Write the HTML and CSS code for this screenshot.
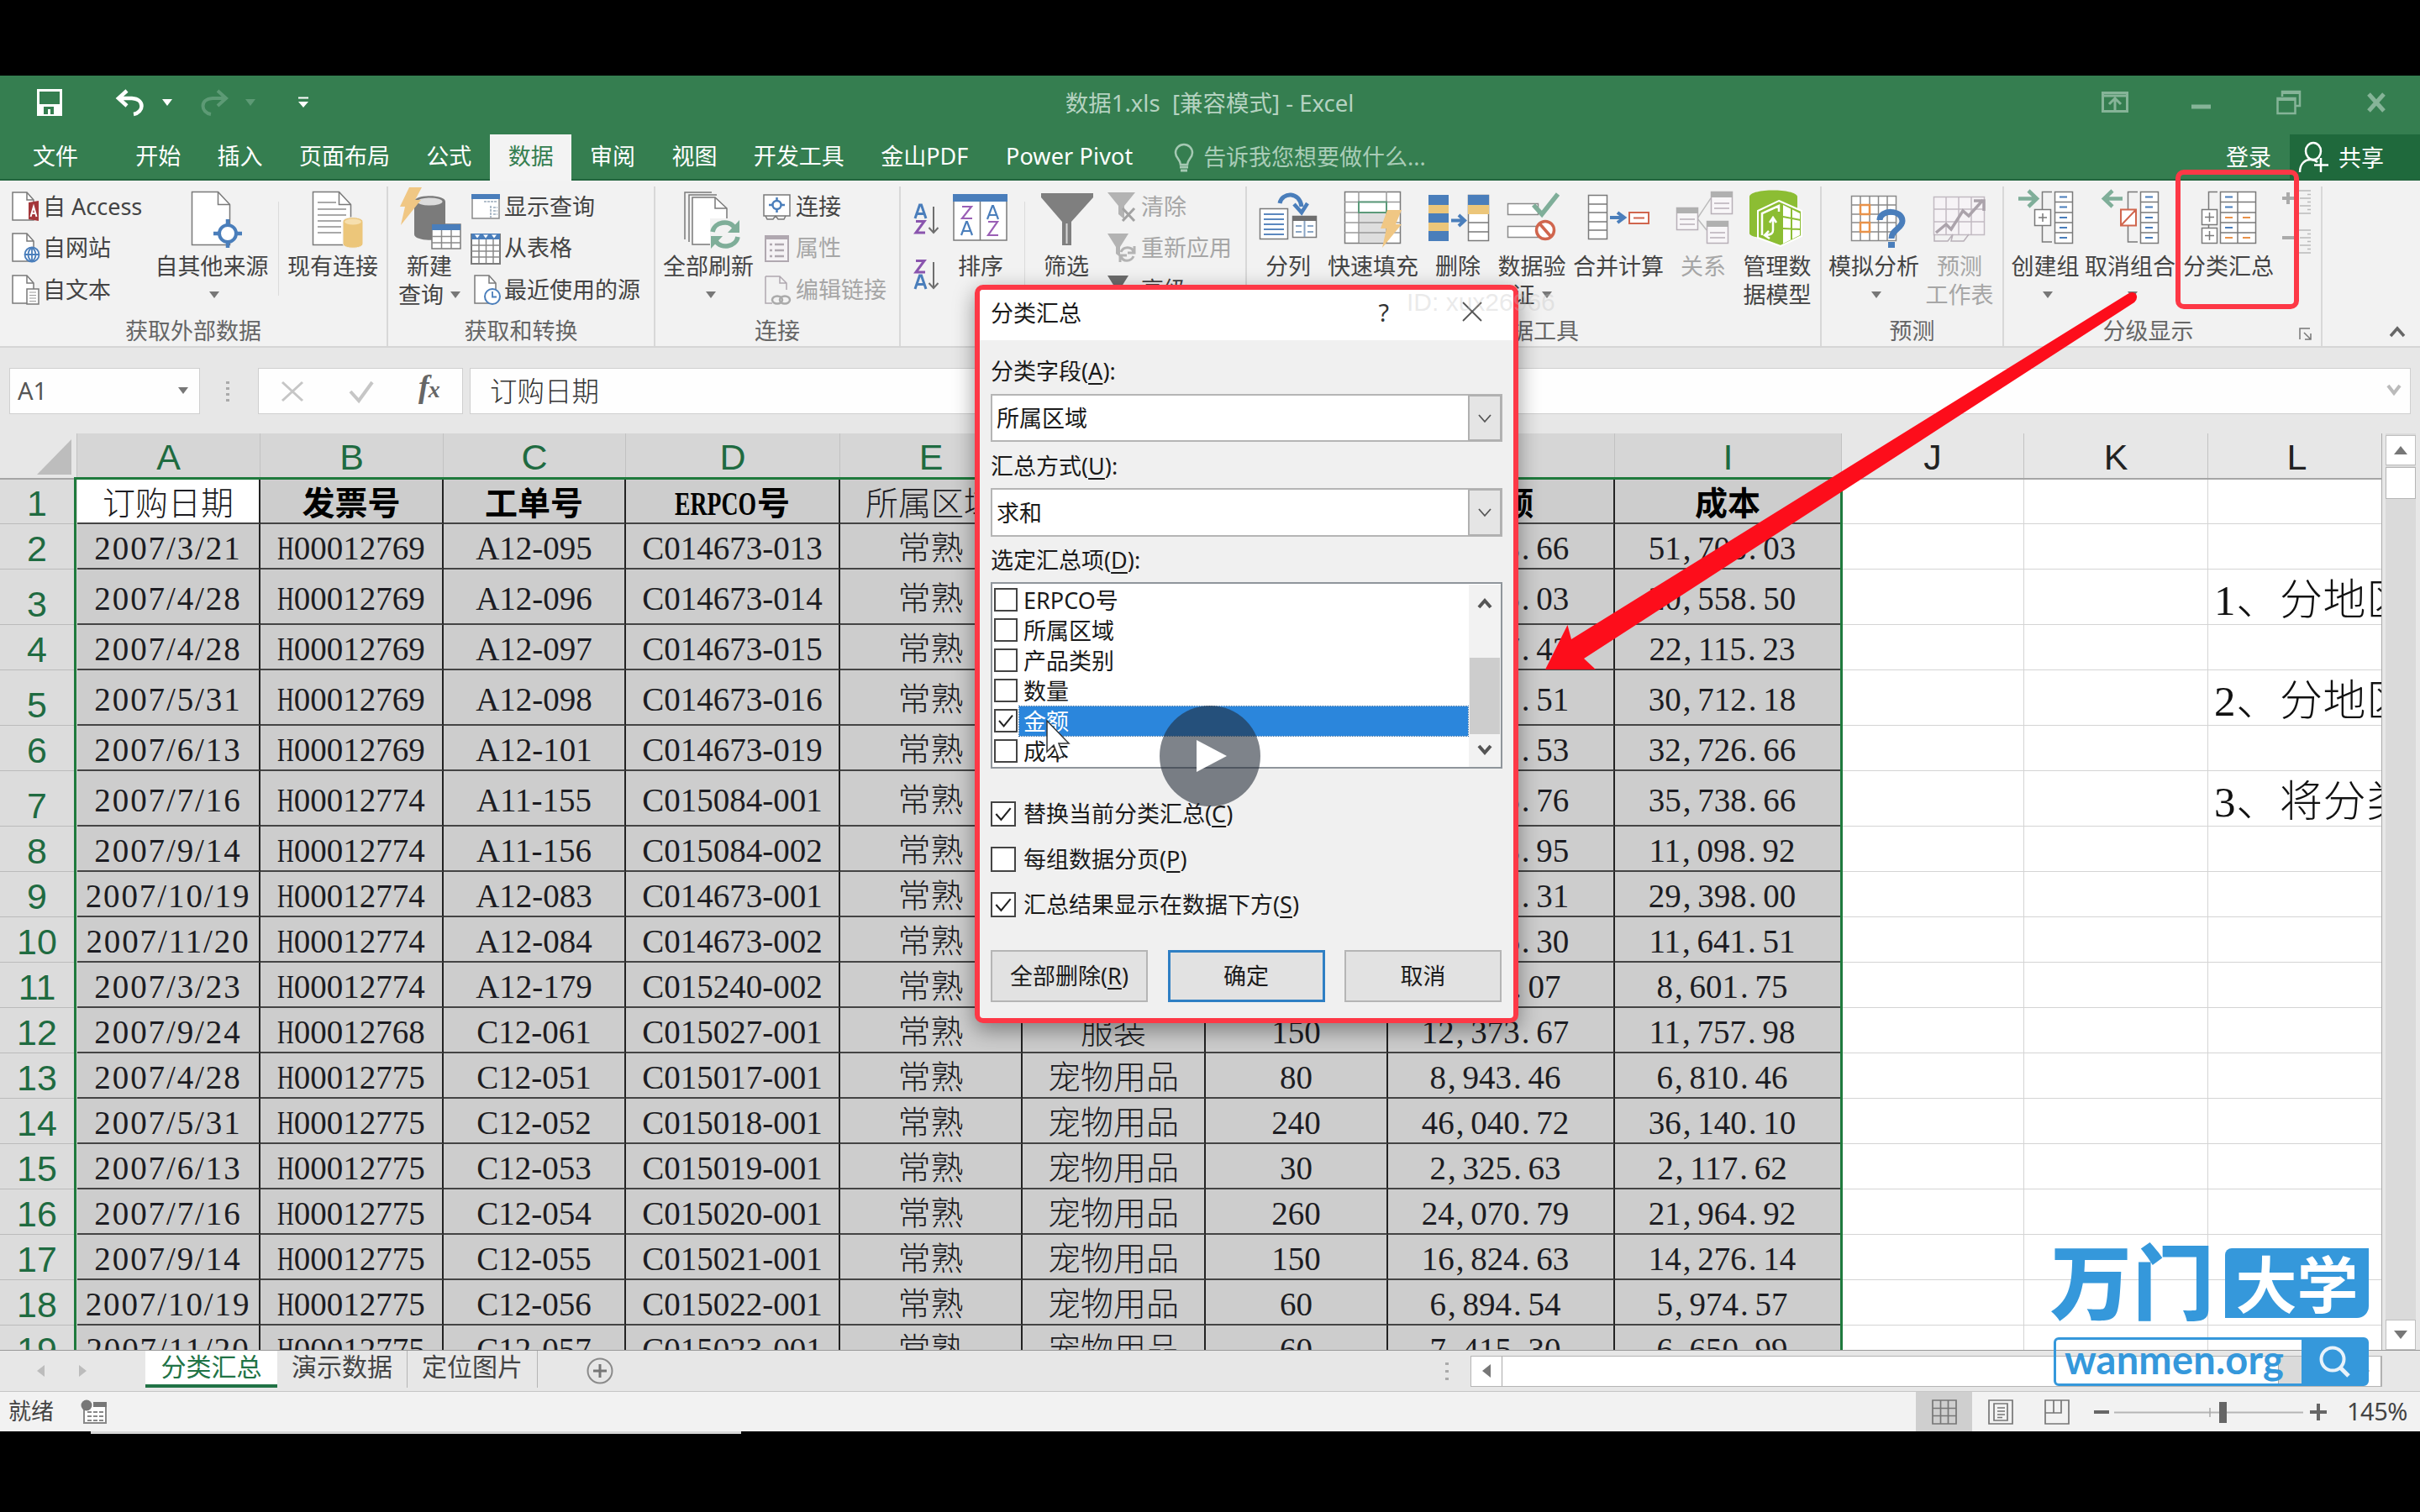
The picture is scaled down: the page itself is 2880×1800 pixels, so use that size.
FILE: index.html
```html
<!DOCTYPE html>
<html lang="zh-CN">
<head>
<meta charset="utf-8">
<title>数据1.xls [兼容模式] - Excel</title>
<link rel="stylesheet" href="styles.css">
</head>
<body>
<div class="app">
  <header class="titlebar">
    <div class="qat">
      <svg class="q-save" width="30" height="32" viewBox="0 0 30 32"><path d="M1.5 1.5h27v29h-27z" fill="none" stroke="#fff" stroke-width="3"/><path d="M2 18h26v12H2z" fill="#fff"/><path d="M8 21h12v9h-4v-6h-3v6H8z" fill="#357e50"/></svg>
      <svg class="q-undo" width="34" height="32" viewBox="0 0 34 32"><path d="M13 2L3 11l10 9M4 11h15c16 1 14 17 2 19" fill="none" stroke="#fff" stroke-width="4.5"/></svg>
      <i class="tri white q-t1"></i>
      <svg class="q-redo" width="34" height="32" viewBox="0 0 34 32"><path d="M21 2l10 9-10 9M30 11H15C-1 12 1 28 13 30" fill="none" stroke="#5d9a75" stroke-width="4"/></svg>
      <i class="tri dim q-t2"></i>
      <svg class="q-more" width="12" height="14" viewBox="0 0 12 14"><path d="M0 1.5h12" stroke="#fff" stroke-width="2"/><path d="M0 6h12l-6 7z" fill="#fff"/></svg>
    </div>
    <div class="doc-title">数据1.xls&nbsp; [兼容模式] - Excel</div>
    <div class="win">
      <svg width="32" height="26" viewBox="0 0 32 26"><path d="M1.5 1.5h29v22h-29zM2 5h28M16 22V9M9 15l7-7 7 7" fill="none" stroke="#86b498" stroke-width="3"/></svg>
      <svg class="w-min" width="23" height="6" viewBox="0 0 23 6"><path d="M0 3h23" stroke="#86b498" stroke-width="5"/></svg>
      <svg class="w-max" width="30" height="30" viewBox="0 0 30 30"><path d="M7 8V2h21v17h-6M1.500 10h21v18h-21z" fill="none" stroke="#86b498" stroke-width="2.500"/><path d="M1 11h22M7 3h21" stroke="#86b498" stroke-width="4"/></svg>
      <svg class="w-x" width="22" height="22" viewBox="0 0 22 22"><path d="M2 1l18 20M20 1L2 21" stroke="#86b498" stroke-width="5"/></svg>
    </div>
  </header>

  <nav class="tabs">
    <div class="tab file">文件</div>
    <div class="tab">开始</div><div class="tab">插入</div><div class="tab">页面布局</div><div class="tab">公式</div><div class="tab on">数据</div><div class="tab">审阅</div><div class="tab">视图</div><div class="tab">开发工具</div><div class="tab">金山PDF</div><div class="tab">Power Pivot</div>
    <svg class="bulb" width="24" height="34" viewBox="0 0 24 34"><path d="M8 25c0-6-6-8-6-14a10 10 0 0 1 20 0c0 6-6 8-6 14z" fill="none" stroke="#a5c9b3" stroke-width="2.500"/><path d="M7 28h10M8 32h8" stroke="#a5c9b3" stroke-width="3"/></svg>
    <div class="tell">告诉我您想要做什么...</div>
    <div class="signin">登录</div>
    <div class="share"><svg width="36" height="38" viewBox="0 0 36 38"><ellipse cx="17" cy="12" rx="9" ry="10" fill="none" stroke="#fff" stroke-width="2.500"/><path d="M1 37c0-10 6-15 13-15 4 0 6 1 8 3M26 20v17M18 28.500h17" fill="none" stroke="#fff" stroke-width="2.500"/></svg><span>共享</span></div>
  </nav>

  <section class="ribbon">
    <div class="group g1">
      <div class="tools">
        <div class="smalls">
          <div class="sm"><svg viewBox="0 0 34 38"><use href="#doc"/><path d="M20 14l12-2v24l-12-2z" fill="#a4373a"/><path d="M22.500 31l3.500-12 3.500 12M23.500 27h5" stroke="#fff" stroke-width="2" fill="none"/></svg>自 Access</div>
          <div class="sm"><svg viewBox="0 0 34 38"><use href="#doc"/><g fill="#fff" stroke="#4a7ebb" stroke-width="1.800"><circle cx="24" cy="27" r="8.500"/><path d="M15.500 27h17M24 18.500v17M24 18.500c-6 5-6 12 0 17M24 18.500c6 5 6 12 0 17" fill="none"/></g></svg>自网站</div>
          <div class="sm"><svg viewBox="0 0 34 38"><use href="#doc"/><path d="M18 18h14v18H18z" fill="#fff" stroke="#7a7a7a" stroke-width="1.500"/><path d="M21 22h8M21 25.500h8M21 29h8M21 32.500h8" stroke="#999" stroke-width="1.200"/></svg>自文本</div>
        </div>
        <div class="big w134"><svg viewBox="0 0 76 78"><use href="#bigdoc"/><g fill="none" stroke="#4a7ebb"><circle cx="57" cy="56" r="10" stroke-width="4" fill="#fff"/><path d="M57 39v9M57 64v9M40 56h9M65 56h9" stroke-width="4.500"/></g></svg><span>自其他来源</span><i class="tri"></i></div>
        <div class="vsep s1"></div>
        <div class="big w110 m9"><svg viewBox="0 0 76 78"><use href="#bigdoc"/><path d="M20 19h22M20 27h34M20 34h34M20 41h28M20 48h28M20 55h28" stroke="#a9a9a9" stroke-width="2"/><path d="M50 42c0-7 24-7 24 0v26c0 7-24 7-24 0z" fill="#ecc67a" stroke="#f2f2f2"/><ellipse cx="62" cy="42" rx="10" ry="3.500" fill="#f6dfae"/></svg><span>现有连接</span></div>
      </div>
      <div class="glabel">获取外部数据</div>
    </div>
    <div class="group g2">
      <div class="tools">
        <div class="big w78"><svg viewBox="0 0 76 78"><path d="M20 18c0-9 37-9 37 0v39c0 9-37 9-37 0z" fill="#7b7b7b"/><ellipse cx="38.500" cy="18" rx="15" ry="4.500" fill="#dcdcdc"/><path d="M14 1h15l-8 15h7L4 46l5-22H3z" fill="#f0c784"/><path d="M41 45h34v29H41z" fill="#fff" stroke="#7b7b7b" stroke-width="1.500"/><path d="M41 45h34v7H41z" fill="#4a7ebb"/><path d="M52.500 52v22M64 52v22M41 59.500h34M41 67h34" stroke="#8a8a8a" stroke-width="1.500"/></svg><span>新建</span><span class="two">查询<i class="tri"></i></span></div>
        <div class="smalls m11">
          <div class="sm"><svg viewBox="0 0 34 38"><path d="M1 5h32v28H1z" fill="#fff" stroke="#8a8a8a" stroke-width="1.500"/><path d="M0 4h34v6H0z" fill="#4a7ebb"/><path d="M15 13h16M23 18v14M26 20h5M26 24h5M26 28h5" stroke="#9ab" stroke-width="1.600" stroke-dasharray="3 1"/></svg>显示查询</div>
          <div class="sm"><svg viewBox="0 0 34 38"><path d="M0 3h34v35H0z" fill="#fff" stroke="#7b7b7b" stroke-width="2"/><path d="M9 9v28M17.500 9v28M26 9v28M0 16h34M0 23h34M0 30h34" stroke="#8a8a8a" stroke-width="1.500"/><path d="M0 2h34v7H0z" fill="#4a7ebb"/><path d="M4 3.500h6l-3 4zM14 3.500h6l-3 4zM24 3.500h6l-3 4z" fill="#fff"/></svg>从表格</div>
          <div class="sm"><svg viewBox="0 0 34 38"><use href="#doc" x="3"/><circle cx="25" cy="27" r="9" fill="#fff" stroke="#4a7ebb" stroke-width="2"/><path d="M25 21v6.500h5" fill="none" stroke="#4a7ebb" stroke-width="1.800"/></svg>最近使用的源</div>
        </div>
      </div>
      <div class="glabel">获取和转换</div>
    </div>
    <div class="group g3">
      <div class="tools">
        <div class="big w110 m8"><svg viewBox="0 0 76 78"><path d="M10 63V7h32M15 66V10h33" fill="none" stroke="#7a7a7a" stroke-width="1.500"/><path d="M19 13h27l14 13v43H19z" fill="#fff" stroke="#7a7a7a" stroke-width="1.500"/><path d="M46 13v13h14" fill="none" stroke="#7a7a7a" stroke-width="1.500"/><path d="M40 38h37v37H40z" fill="#f2f2f2"/><path d="M43 54c2-12 20-15 26-5M73 60c-2 12-20 15-26 5" fill="none" stroke="#7fae99" stroke-width="5.500"/><path d="M75 40v15H61zM41 74V59h14z" fill="#7fae99"/></svg><span>全部刷新</span><i class="tri"></i></div>
        <div class="smalls m9">
          <div class="sm w40"><svg viewBox="0 0 34 38"><path d="M2 5h31v25H2z" fill="#fff" stroke="#7a7a7a" stroke-width="1.500"/><circle cx="17.500" cy="17" r="5" fill="none" stroke="#4a7ebb" stroke-width="2.500"/><path d="M17.500 8v5M17.500 21v5M8 17h5M22 17h5" stroke="#4a7ebb" stroke-width="2.500"/><path d="M4 30l2 4h7l3-4M16 30l3 4h7l2-4" fill="none" stroke="#7a7a7a" stroke-width="1.500"/></svg>连接</div>
          <div class="sm w40 off"><svg viewBox="0 0 34 38"><path d="M4 5h27v30H4z" fill="#f5f2f5" stroke="#b0a8b0" stroke-width="2"/><path d="M4 4h27v5H4z" fill="#b0a8b0"/><path d="M9 15h3M15 15h11M9 22h3M15 22h11M9 29h3M15 29h11" stroke="#b0a8b0" stroke-width="2.500"/></svg>属性</div>
          <div class="sm w40 off"><svg viewBox="0 0 34 38"><path d="M4 3h17l8 8v8M12 35H4V3M21 3v8h8" fill="none" stroke="#b0a8b0" stroke-width="1.500"/><g fill="none" stroke="#aaa" stroke-width="2.500"><ellipse cx="18" cy="31" rx="6" ry="4.500"/><ellipse cx="27" cy="31" rx="6" ry="4.500"/></g></svg>编辑链接</div>
        </div>
      </div>
      <div class="glabel">连接</div>
    </div>
    <div class="group g4">
      <div class="tools">
        <div class="az">
          <svg viewBox="0 0 32 40"><g fill="none" stroke-width="3"><path d="M1 19L6.500 3h2L14 19M3 13.500h9" stroke="#4a7ebb"/><path d="M2 22.500h10L2 36h11" stroke="#8a55ae"/><path d="M23 5v31M17.500 30l5.500 6 5.500-6" stroke="#6e6e6e" stroke-width="2"/></g></svg>
          <svg viewBox="0 0 32 40"><g fill="none" stroke-width="3"><path d="M2 3.500h10L2 17h11" stroke="#8a55ae"/><path d="M1 37L6.500 21h2L14 37M3 31.500h9" stroke="#4a7ebb"/><path d="M23 5v31M17.500 30l5.500 6 5.500-6" stroke="#6e6e6e" stroke-width="2"/></g></svg>
        </div>
        <div class="big w70"><svg viewBox="0 0 76 78"><path d="M6 10h63v54H6z" fill="#fff" stroke="#7a7a7a" stroke-width="1.500"/><path d="M5 9h65v9H5z" fill="#4a7ebb"/><path d="M37.500 18v46" stroke="#7a7a7a" stroke-width="1.500"/><g fill="none" stroke-width="2.200"><path d="M16 24h11L16 38h12M47 42h11L47 58h12" stroke="#9a5fb5"/><path d="M15 58l6-16h1l6 16M17 53h9M46 39l6-16h1l6 16M48 34h9" stroke="#4a7ebb"/></g></svg><span>排序</span></div>
        <div class="vsep s2"></div>
        <div class="big w76 m11"><svg viewBox="0 0 76 78"><path d="M8 8h62v5L44 42v28H33V42L8 13z" fill="#7f7f7f"/><path d="M38.500 44v24" stroke="#d8d8d8" stroke-width="2"/></svg><span>筛选</span></div>
        <div class="smalls m11">
          <div class="sm w40 off"><svg viewBox="0 0 34 38"><path d="M0 2h33L20 18v16l-7-6V18z" fill="#b3b3b3"/><path d="M18 21l14 15M32 21L18 36" stroke="#a2a2a2" stroke-width="3"/></svg>清除</div>
          <div class="sm w40 off"><svg viewBox="0 0 34 38"><path d="M0 2h25L15 18v12l-5-4V18z" fill="#b3b3b3"/><path d="M16 24c3-7 13-7 15 0M31 29c-3 7-13 7-15 0M32 17v8h-8M15 36v-8h8" fill="none" stroke="#b3b3b3" stroke-width="3"/></svg>重新应用</div>
          <div class="sm w40"><svg viewBox="0 0 34 38"><path d="M0 2h25L15 18v12l-5-4V18z" fill="#6b6b6b"/></svg>高级</div>
        </div>
      </div>
    </div>
    <div class="group g5">
      <div class="tools">
        <div class="big w80"><svg viewBox="0 0 76 78"><path d="M4.500 26.500h33v36h-33z" fill="#fff" stroke="#7a7a7a" stroke-width="1.500"/><path d="M9 33h24M9 39h24M9 45h24M9 51h24M9 57h24" stroke="#5b88bf" stroke-width="2"/><path d="M43.500 35.500h28v25h-28z" fill="#fff" stroke="#7a7a7a" stroke-width="1.500"/><path d="M43 35h29v6H43z" fill="#6e6e6e"/><path d="M57.500 41v19M47 47h7M61 47h7M47 54h7M61 54h7" stroke="#8aa5c5" stroke-width="2"/><path d="M28 20c3-14 24-14 26 4" fill="none" stroke="#4a7ebb" stroke-width="5"/><path d="M45 21l9 10 7-11" fill="none" stroke="#4a7ebb" stroke-width="4.500"/></svg><span>分列</span></div>
        <div class="big w110"><svg viewBox="0 0 76 78"><path d="M4.500 6.500h66v61h-66z" fill="#fff" stroke="#7a7a7a" stroke-width="1.500"/><path d="M21 31h33v36H21z" fill="#dedede"/><path d="M21 6v61M54 6v61M4 18.500h66M4 31h66M4 43h66M4 55h66" stroke="#9a9a9a" stroke-width="1.500"/><path d="M21 18.500h33V31H21z" fill="#fff" stroke="#5b9a7a" stroke-width="2"/><path d="M55 28h17l-7 17h7L49 73l5-23h-7z" fill="#f0c784"/></svg><span>快速填充</span></div>
        <div class="big w80"><svg viewBox="0 0 76 78"><path d="M3 10h24v55H3z" fill="#4a7ebb"/><path d="M3 22h24v10H3zM3 43h24v10H3z" fill="#ecc67a"/><path d="M50.500 10.500h24v54h-24z" fill="#fff" stroke="#7a7a7a" stroke-width="1.500"/><path d="M50 10h25v12H50z" fill="#4a7ebb"/><path d="M50 22h25v11H50z" fill="#ecc67a"/><path d="M50 43h25M50 54h25" stroke="#7a7a7a" stroke-width="1.500"/><path d="M30 40.500h14M39 34l7 6.500-7 6.500" fill="none" stroke="#4a7ebb" stroke-width="4"/></svg><span>删除</span></div>
        <div class="big w84"><svg viewBox="0 0 76 78"><path d="M9.500 20.500h36v13h-36zM9.500 47.500h36v13h-36z" fill="#fff" stroke="#8a8a8a" stroke-width="1.500"/><path d="M40 22l10 11L69 9" fill="none" stroke="#7fae99" stroke-width="5.500"/><circle cx="54" cy="52" r="10.500" fill="#fff" stroke="#d0664e" stroke-width="3.500"/><path d="M47 44l14 16" stroke="#d0664e" stroke-width="3.500"/></svg><span>数据验</span><span class="two">证<i class="tri"></i></span></div>
        <div class="big w110"><svg viewBox="0 0 76 78"><path d="M2.500 10.500h22v52h-22zM2 21h23M2 31h23M2 42h23M2 52h23" fill="#fff" stroke="#7a7a7a" stroke-width="1.500"/><path d="M28 37h16M37 31l8 6-8 6" fill="none" stroke="#4a7ebb" stroke-width="4"/><path d="M51 31h23v13H51zM56 37.500h13" fill="#fff" stroke="#d0664e" stroke-width="2"/></svg><span>合并计算</span></div>
        <div class="big w80 off"><svg viewBox="0 0 76 78"><path d="M31 38l16-24M31 38l11 14" stroke="#bbb" stroke-width="1.500"/><g fill="#f8f6f8" stroke="#b8b0b8" stroke-width="1.500"><path d="M6.500 25.500h25v26h-25zM47.500 6.500h25v26h-25zM42.500 41.500h25v26h-25z"/><path d="M10 39h18M10 45h18M51 20h18M51 26h18M46 55h18M46 61h18"/></g><path d="M6 25h26v7H6zM47 6h26v7H47zM42 41h26v7H42z" fill="#b0b0b0"/></svg><span>关系</span></div>
        <div class="big w84"><svg viewBox="0 0 76 78"><path d="M5 12C6 2 60 2 62 12v44c-2 8-55 8-57 0z" fill="#8cbd33"/><path d="M40 17l27 12v30L42 71 15 61V29z" fill="#8cbd33" stroke="#fff" stroke-width="2"/><path d="M45 22l20 10v26L45 68z" fill="#fff"/><path d="M55 25v38M45 36l21 4M45 50l21 1" stroke="#8cbd33" stroke-width="2"/><path d="M20 58V32l20-9v7M33 38v14c0 4-2 5-8 6M29 43l4-6 4 6M28 53l-5 5 6 4" fill="none" stroke="#fff" stroke-width="2.500"/></svg><span>管理数</span><span>据模型</span></div>
      </div>
      <div class="glabel">数据工具</div>
    </div>
    <div class="group g6">
      <div class="tools">
        <div class="big w110"><svg viewBox="0 0 76 78"><path d="M11.500 11.500h53v53h-53zM22 11v53M33 11v53M43.500 11v53M54 11v53M11 22h54M11 33h54M11 43h54M11 54h54" fill="#fff" stroke="#8a8a8a" stroke-width="1.500"/><path d="M22 22h11v11H22zM22 43h11v11H22z" fill="#fff" stroke="#e8924a" stroke-width="2.500"/><path d="M45 40c0-13 27-13 27 1 0 9-13 10-13 21" fill="none" stroke="#4a7ebb" stroke-width="7"/><path d="M55 66h8v7h-8z" fill="#4a7ebb"/></svg><span>模拟分析</span><i class="tri"></i></div>
        <div class="big w84 off"><svg viewBox="0 0 76 78"><path d="M7.500 12.500h60v45h-60zM22 12v45M37 12v45M52 12v45M7 27h60M7 42h60" fill="#f6f3f6" stroke="#c2bac2" stroke-width="1.500"/><path d="M8 57v8h16l6-8M30 57l-2 8h15l6-8" fill="none" stroke="#b8b0b8" stroke-width="1.500"/><path d="M10 55l12-10 6 6 14-22 7 6 17-19M55 17h12v12" fill="none" stroke="#aba3ab" stroke-width="3.500"/></svg><span>预测</span><span>工作表</span></div>
      </div>
      <div class="glabel">预测</div>
    </div>
    <div class="group g7">
      <div class="tools">
        <div class="big w84"><svg viewBox="0 0 76 78"><path d="M6 14.500h21M18 5l10 9.500L18 24" fill="none" stroke="#7fae99" stroke-width="4.500"/><path d="M46 6.500H34.500V27M34.500 46v20H46" fill="none" stroke="#7a7a7a" stroke-width="1.500"/><path d="M25.500 27.500h19v19h-19zM30 37h10M35 32v10" fill="#fff" stroke="#7a7a7a" stroke-width="1.500"/><g transform="translate(49 0)"><path d="M.500 6.500h21v61H.500zM0 18.500h21M0 31h21M0 43h21M0 55h21" fill="#fff" stroke="#7a7a7a" stroke-width="1.500"/><path d="M6 12.500h9M6 24.500h9M6 37h9M6 49h9M6 61h9" stroke="#4a7ebb" stroke-width="2"/></g></svg><span>创建组</span><i class="tri"></i></div>
        <div class="big w106"><svg viewBox="0 0 76 78"><path d="M29 14.500H8M17 5L7 14.500 17 24" fill="none" stroke="#7fae99" stroke-width="4.500"/><path d="M47 6.500H35.500V27M35.500 46v20H47" fill="none" stroke="#7a7a7a" stroke-width="1.500"/><path d="M27 27.500h18v19H27zM27 46.500l18-19" fill="#fff" stroke="#d0664e" stroke-width="2"/><g transform="translate(50 0)"><path d="M.500 6.500h21v61H.500zM0 18.500h21M0 31h21M0 43h21M0 55h21" fill="#fff" stroke="#7a7a7a" stroke-width="1.500"/><path d="M6 12.500h9M6 24.500h9M6 37h9M6 49h9M6 61h9" stroke="#4a7ebb" stroke-width="2"/></g></svg><span>取消组合</span><i class="tri"></i></div>
        <div class="big w110 m9"><svg viewBox="0 0 76 78"><path d="M25 6.500H14.500V27M14.500 44v5" fill="none" stroke="#7a7a7a" stroke-width="1.500"/><path d="M6.500 27.500h18v18h-18zM10 36.500h11M15.500 31v11M6.500 49.500h18v18h-18zM10 58.500h11M15.500 53v11" fill="#fff" stroke="#7a7a7a" stroke-width="1.500"/><path d="M28.500 6.500h42v61h-42zM49 6v61M28 18.500h42M28 31h42M28 43h42M28 55h42" fill="#fff" stroke="#7a7a7a" stroke-width="1.500"/><path d="M34 12.500h9M34 24.500h9M34 49h9" stroke="#4a7ebb" stroke-width="2"/><path d="M34 37h9M55 37h9M34 61h9M55 61h9" stroke="#e8924a" stroke-width="2"/></svg><span>分类汇总</span></div>
        <div class="detail">
          <svg viewBox="0 0 36 34"><path d="M0 12h14M7 5v14" stroke="#aaa" stroke-width="4"/><path d="M19 3h15M21 12h13M21 21h13M19 30h15M30 7.500h4M30 16.500h4M30 25.500h4" stroke="#bbb" stroke-width="1.500"/></svg>
          <svg viewBox="0 0 36 34"><path d="M0 12h14" stroke="#aaa" stroke-width="4"/><path d="M19 3h15M21 12h13M21 21h13M19 30h15M30 7.500h4M30 16.500h4M30 25.500h4" stroke="#bbb" stroke-width="1.500"/></svg>
        </div>
      </div>
      <div class="glabel">分级显示<svg class="launch" width="16" height="16" viewBox="0 0 16 16"><path d="M1 14V1h12M6 6l8 8M14 7v7H7" fill="none" stroke="#777" stroke-width="1.500"/></svg></div>
    </div>
    <svg class="collapse" width="20" height="14" viewBox="0 0 20 14"><path d="M2 12l8-9 8 9" fill="none" stroke="#666" stroke-width="3.500"/></svg>
  </section>

  <section class="fbar">
    <div class="namebox"><span>A1</span><i class="tri"></i></div>
    <div class="dots"><i></i><i></i><i></i><i></i></div>
    <div class="fbtns">
      <svg width="28" height="24" viewBox="0 0 28 24"><path d="M2 1l24 22M26 1L2 23" stroke="#c6c6c6" stroke-width="3"/></svg>
      <svg width="30" height="26" viewBox="0 0 30 26"><path d="M2 13l10 11L28 2" fill="none" stroke="#c6c6c6" stroke-width="4"/></svg>
      <span class="fx">f<small>x</small></span>
    </div>
    <div class="finput"><span>订购日期</span><svg width="18" height="14" viewBox="0 0 18 14"><path d="M2 2l7 9 7-9" fill="none" stroke="#bbb" stroke-width="4"/></svg></div>
  </section>

  <main class="work">
    <div class="sheet">
      <div class="heads" id="heads"></div>
      <div class="rows" id="rows"></div>
      <div class="range"></div>
    </div>
    <div class="vscroll"><div class="sbtn"><i class="up"></i></div><div class="sthumb"></div><div class="sbtn end"><i class="down"></i></div></div>
  </main>

  <section class="sheetbar">
    <i class="nav l"></i><i class="nav r"></i>
    <div class="stab on">分类汇总</div><div class="stab">演示数据</div><div class="stab last">定位图片</div>
    <svg class="add" width="34" height="34" viewBox="0 0 34 34"><circle cx="17" cy="17" r="14.500" fill="none" stroke="#8a8a8a" stroke-width="2"/><path d="M9 17h16M17 9v16" stroke="#777" stroke-width="3"/></svg>
    <div class="dots hd"><i></i><i></i><i></i></div>
    <div class="hscroll"><div class="hb"><i class="left"></i></div><div class="ht"></div><div class="hb e"><i class="right"></i></div></div>
  </section>

  <footer class="status">
    <span class="ready">就绪</span>
    <svg class="macro" width="32" height="30" viewBox="0 0 32 30"><path d="M4 10v18h26V4H16" fill="#fff" stroke="#888" stroke-width="2"/><path d="M15 3h16v6H15z" fill="#777"/><circle cx="7" cy="7" r="6.500" fill="#777"/><path d="M8 15h19M8 20h19M8 25h19" stroke="#888" stroke-width="2" stroke-dasharray="5 2"/></svg>
    <div class="views">
      <div class="view on"><svg width="30" height="30" viewBox="0 0 30 30"><path d="M1 1h28v28H1zM10.500 1v28M19.500 1v28M1 10.500h28M1 19.500h28" fill="none" stroke="#777" stroke-width="1.700"/></svg></div>
      <div class="view"><svg width="30" height="30" viewBox="0 0 30 30"><path d="M1 1h28v28H1zM7 5h16v20H7zM11 10h9M11 14h9M11 18h9M11 21.500h6" fill="none" stroke="#777" stroke-width="1.700"/></svg></div>
      <div class="view"><svg width="30" height="30" viewBox="0 0 30 30"><path d="M1 1h28v28H1zM1 16h19V1M11 1v15" fill="none" stroke="#777" stroke-width="1.700"/></svg></div>
    </div>
    <svg class="zoom" width="280" height="28" viewBox="0 0 280 28"><path d="M1 14h18" stroke="#666" stroke-width="4"/><path d="M25 14.500h225" stroke="#b5b5b5" stroke-width="2"/><path d="M139 9v11" stroke="#aaa" stroke-width="1.500"/><path d="M154.500 2v25" stroke="#666" stroke-width="9"/><path d="M258 14h20M268 4v20" stroke="#666" stroke-width="4"/></svg>
    <span class="pct">145%</span>
  </footer>
  <div class="edge"></div>

  <div class="logo">
    <div class="brand"><span class="wm">万门</span><span class="dx">大学</span></div>
    <div class="site"><span>wanmen.org</span><b><svg width="42" height="42" viewBox="0 0 42 42"><circle cx="19" cy="18" r="13.500" fill="none" stroke="#e8f2fa" stroke-width="4"/><path d="M28 28l10 10" stroke="#e8f2fa" stroke-width="5"/></svg></b></div>
  </div>

  <div class="dialog">
    <div class="dtitle"><span>分类汇总</span><em>?</em><svg width="24" height="24" viewBox="0 0 24 24"><path d="M1 1l22 22M23 1L1 23" stroke="#555" stroke-width="1.800"/></svg></div>
    <div class="dbody">
      <label>分类字段(<u>A</u>):</label>
      <div class="combo c1"><span>所属区域</span><b><svg width="18" height="12" viewBox="0 0 18 12"><path d="M2 2l7 8 7-8" fill="none" stroke="#555" stroke-width="1.800"/></svg></b></div>
      <label class="l2">汇总方式(<u>U</u>):</label>
      <div class="combo c2"><span>求和</span><b><svg width="18" height="12" viewBox="0 0 18 12"><path d="M2 2l7 8 7-8" fill="none" stroke="#555" stroke-width="1.800"/></svg></b></div>
      <label class="l3">选定汇总项(<u>D</u>):</label>
      <div class="list">
        <div class="items">
          <div class="it"><i></i><span>ERPCO号</span></div>
          <div class="it"><i></i><span>所属区域</span></div>
          <div class="it"><i></i><span>产品类别</span></div>
          <div class="it"><i></i><span>数量</span></div>
          <div class="it sel"><i><svg viewBox="0 0 30 30"><use href="#tick"/></svg></i><span>金额</span></div>
          <div class="it"><i></i><span>成本</span></div>
        </div>
        <div class="lscroll"><svg width="18" height="14" viewBox="0 0 18 14"><path d="M2 12l7-8 7 8" fill="none" stroke="#555" stroke-width="4"/></svg><div></div><svg width="18" height="14" viewBox="0 0 18 14"><path d="M2 2l7 8 7-8" fill="none" stroke="#555" stroke-width="4"/></svg></div>
      </div>
      <div class="opts">
        <div class="opt"><i><svg viewBox="0 0 30 30"><use href="#tick"/></svg></i>替换当前分类汇总(<u>C</u>)</div>
        <div class="opt"><i></i>每组数据分页(<u>P</u>)</div>
        <div class="opt"><i><svg viewBox="0 0 30 30"><use href="#tick"/></svg></i>汇总结果显示在数据下方(<u>S</u>)</div>
      </div>
      <div class="btns"><div>全部删除(<u>R</u>)</div><div class="ok">确定</div><div>取消</div></div>
    </div>
  </div>
  <div class="uid">ID: xux26966</div>
  <svg class="cursor" width="30" height="52" viewBox="0 0 30 52"><path d="M1 1v37l8-8 6 16 6-3-6-15h12z" fill="#fff" stroke="#333" stroke-width="1.500"/></svg>
  <svg class="play" width="120" height="120" viewBox="0 0 120 120"><circle cx="60" cy="60" r="60" fill="#202a36" fill-opacity=".58"/><path d="M44 41l36 19-36 19z" fill="#fff"/></svg>
  <div class="mark"></div>
  <svg class="arrow" width="720" height="470" viewBox="1830 340 720 470"><path d="M1839 797l26.500-53 4.500 17L2532 350q6-4 10 0 3 5-2 10L1885 784l14 13z" fill="#fd0d1b"/></svg>
</div>

<svg width="0" height="0" class="defs">
  <symbol id="doc" overflow="visible"><path d="M1 2h17l8 9v24H1z" fill="#fff" stroke="#7a7a7a" stroke-width="1.500"/><path d="M18 2v9h8" fill="none" stroke="#7a7a7a" stroke-width="1.500"/></symbol>
  <symbol id="bigdoc" overflow="visible"><path d="M14.500 6.500h31l14 15v48h-45z" fill="#fff" stroke="#7a7a7a" stroke-width="1.500"/><path d="M45.500 6.500v15h14" fill="none" stroke="#7a7a7a" stroke-width="1.500"/></symbol>
  <symbol id="tick" overflow="visible"><path d="M5 15l7 8L25 7" fill="none" stroke="#222" stroke-width="2.500"/></symbol>
</svg>
<script src="sheet.js"></script>
</body>
</html>
```
FILE: styles.css
```css
* { box-sizing: border-box; }
body { margin: 0; background: #000; width: 2880px; height: 1800px; overflow: hidden; font-family: "Noto Sans", "Noto Sans CJK SC", sans-serif; font-size: 27px; color: #444; }
i { font-style: normal; }
svg { display: block; overflow: visible; flex: none; }
.defs { position: absolute; }
.app { position: relative; width: 2880px; height: 1800px; padding-top: 90px; white-space: nowrap; }

.tri { display: block; width: 0; height: 0; border: 6px solid transparent; border-top: 8px solid #777; border-bottom: 0; }
.tri.white { border-top-color: #fff; }
.tri.dim { border-top-color: #5d9a75; }

.titlebar { height: 70px; background: #357e50; display: flex; align-items: flex-start; justify-content: space-between; }
.qat { display: flex; align-items: center; padding-left: 44px; height: 63px; width: 420px; }
.q-undo { margin-left: 64px; }
.q-t1 { margin-left: 21px; }
.q-redo { margin-left: 33px; }
.q-t2 { margin-left: 20px; }
.q-more { margin-left: 51px; }
.doc-title { width: 420px; margin-left: -1px; text-align: center; color: #b4d2c0; font-size: 27.500px; line-height: 66px; }
.win { width: 420px; display: flex; align-items: center; justify-content: flex-end; padding-right: 41px; height: 64px; }
.w-min { margin: 10px 0 0 75px; }
.w-max { margin-left: 78px; }
.w-x { margin-left: 78px; }

.tabs { height: 55px; background: #357e50; display: flex; align-items: stretch; color: #fff; border-bottom: 2px solid #22653d; }
.tab { padding: 0 21.700px; line-height: 52px; }
.tab.file { padding: 0 46.500px 0 39px; }
.tab.on { background: #f3f3f3; color: #357e50; height: 55px; }
.tab:nth-of-type(11) { letter-spacing: .15px; padding-left: 23px; }
.bulb { margin: 11px 0 0 27px; }
.tell { margin-left: 11px; line-height: 53px; color: #a9ccb7; }
.signin { margin-left: auto; line-height: 53px; width: 76px; }
.share { width: 155px; background: #1f693c; display: flex; align-items: center; padding-left: 11px; }
.share span { margin-left: 11px; }

.ribbon { height: 199px; background: #f2f2f2; display: flex; border-bottom: 2px solid #d5d5d5; }
.group { height: 190px; margin-top: 7px; border-right: 2px solid #d8d8d8; flex: none; }
.tools { height: 147px; display: flex; }
.g1 { width: 462px; } .g2 { width: 318px; } .g3 { width: 292px; } .g4 { width: 412px; } .g5 { width: 684px; } .g6 { width: 217px; } .g7 { width: 379px; }
.g1 .tools { padding-left: 14px; }
.g2 .tools { padding-left: 10px; }
.g4 .tools { padding-left: 16px; }
.g5 .tools { padding-left: 9px; gap: 6px; }
.g6 .tools { padding-left: 7px; gap: 5px; }
.g7 .tools { padding-left: 7px; }
.g7 .w106 { margin-left: 6px; }
.big { display: flex; flex-direction: column; align-items: center; flex: none; line-height: 34px; }
.big > svg { width: 76px; height: 78px; }
.big > .tri { margin: 13px 0 0 6px; }
.big .two { display: flex; align-items: center; gap: 8px; }
.off { color: #a6a6a6; }
.w134 { width: 134px; } .w110 { width: 110px; } .w106 { width: 106px; } .w84 { width: 84px; } .w80 { width: 80px; } .w78 { width: 78px; } .w76 { width: 76px; } .w70 { width: 70px; }
.m8 { margin-left: 8px; } .m9 { margin-left: 9px; } .m11 { margin-left: 11px; }
.smalls { flex: none; }
.g1 .smalls { width: 171px; }
.g1 .sm { gap: 3px; }
.sm { height: 49.500px; display: flex; align-items: center; gap: 5px; line-height: 46px; padding-bottom: 2px; }
.sm svg { width: 34px; height: 38px; }
.sm.w40 svg { margin-right: 1px; }
.vsep { width: 1px; height: 112px; margin-top: 18px; background: #dcdcdc; }
.s1 { margin-left: 12px; } .s2 { margin-left: 17px; }
.az { width: 44px; padding-top: 19px; display: flex; flex-direction: column; gap: 26px; }
.az svg { width: 32px; height: 40px; }
.detail { margin-left: 9px; padding-top: 2px; display: flex; flex-direction: column; gap: 13px; }
.detail svg { width: 36px; height: 34px; }
.glabel { text-align: center; line-height: 50px; color: #666; position: relative; }
.g7 .glabel { padding-right: 34px; }
.launch { position: absolute; right: 10px; top: 21px; }
.collapse { margin: 173px 0 0 79px; }

.fbar { height: 102px; background: #e7e7e7; display: flex; padding: 24px 11px 0; color: #555; }
.fbar > div { height: 55px; background: #fefefe; border: 1px solid #cfcfcf; display: flex; align-items: center; }
.namebox { width: 227px; justify-content: space-between; padding: 0 13px 2px 9px; font-size: 29px; }
.fbar .dots { background: none; border: 0; }
.dots { display: flex; flex-direction: column; justify-content: center; gap: 4px; width: 4px; margin-left: 31px; }
.dots i { width: 4px; height: 3px; background: #aaa; }
.fbtns { width: 244px; margin-left: 34px; padding-left: 26px; }
.fbtns svg + svg { margin-left: 53px; }
.fx { font: italic bold 38px/40px "Liberation Serif", serif; color: #666; margin: -8px 0 0 53px; letter-spacing: -1px; }
.fx small { font-size: 28px; }
.finput { flex: 1; margin-left: 8px; padding: 0 10px 3px 23px; justify-content: space-between; font-size: 32.500px; font-weight: 300; color: #333; }

.work { height: 1091px; display: flex; background: #e7e7e7; }
.sheet { width: 2835px; height: 1091px; overflow: hidden; position: relative; background: #fff; border-right: 1px solid #aaa; }
.heads, .row { display: grid; grid-template-columns: 92px 218px 218px 217px 255px 217px 218px 217px 270px 270px 217px 219px 212px; }
.heads { height: 55px; background: #e7e7e7; border-bottom: 2px solid #a5a5a5; font: 43px/57px "Liberation Sans", sans-serif; text-align: center; color: #222; }
.heads div { border-right: 1px solid #c2c2c2; height: 53px; }
.heads .hs { background: #d6d6d6; color: #1f6b41; }
.corner::after { content: ""; display: block; margin: 7px 0 0 44px; width: 41px; height: 42px; background: #bdbdbd; clip-path: polygon(100% 0, 100% 100%, 0 100%); }
.row { height: 54px; }
.row.tall { height: 66px; }
.row.first { height: 53px; }
.row > div { overflow: hidden; display: flex; align-items: center; justify-content: center; padding-top: 6px; border-right: 1px solid #d4d4d4; border-bottom: 1px solid #d4d4d4; }
.row .num { font: 43px/47px "Liberation Sans", sans-serif; color: #1f6b41; background: #dcdcdc; align-items: flex-end; border-bottom-color: #bbb; padding: 0 3px 0 0; }
.row .d { background: #cdcdcd; border-right: 2px solid #222; border-bottom: 2px solid #444; font: 39px/44px "Liberation Serif", "Noto Sans CJK SC", serif; font-weight: 300; color: #1c1c22; }
.row .slash { letter-spacing: 1.900px; }
.row .amt { padding-right: 13px; }
.p { letter-spacing: .2em; margin-left: .05em; }
.h { display: inline-block; width: .5em; transform: scaleX(.7); transform-origin: 0 50%; }
.row .b { font-weight: 600; color: #000; }
.row .cur { background: #fff; }
.row .d.cut { justify-content: flex-start; padding-left: 30px; }
.sq { display: inline-block; width: 98px; transform: scaleX(.71); transform-origin: 0 50%; }
.row .note { justify-content: flex-start; padding: 9px 0 0 7px; font: 51px/56px "Liberation Serif", "Noto Sans CJK SC", serif; font-weight: 300; color: #111; letter-spacing: .7px; }
.range { position: absolute; left: 88px; top: 52px; width: 2105px; height: 1100px; border: 3px solid #1f7a3d; }
.vscroll { width: 36px; margin-left: 4px; padding-top: 2px; background: #dadada; display: flex; flex-direction: column; }
.sbtn { height: 36px; background: #fff; border: 1px solid #c0c0c0; display: flex; align-items: center; justify-content: center; }
.sbtn.end { margin-top: auto; }
.sthumb { height: 38px; margin-top: 2px; background: #fff; border: 1px solid #b5b5b5; }
.up, .down, .left, .right { width: 0; height: 0; border: 8px solid transparent; }
.up { border-top: 0; border-bottom: 10px solid #777; }
.down { border-bottom: 0; border-top: 10px solid #777; }
.left { border-left: 0; border-right: 10px solid #777; }
.right { border-right: 0; border-left: 10px solid #777; }

.sheetbar { height: 50px; background: #e7e7e7; border-top: 1px solid #999; border-bottom: 1px solid #c6c6c6; display: flex; align-items: center; }
.nav { width: 0; height: 0; border: 7px solid transparent; }
.nav.l { margin-left: 44px; border-left: 0; border-right: 9px solid #bcbcbc; }
.nav.r { margin-left: 41px; border-right: 0; border-left: 9px solid #bcbcbc; }
.stab { font-size: 30px; line-height: 37px; height: 44px; width: 155px; text-align: center; align-self: flex-start; color: #444; border-right: 1px solid #b5b5b5; }
.stab.on { width: 157px; margin-left: 70px; background: #fff; color: #217346; border: 0; border-bottom: 4px solid #217346; }
.add { margin-left: 57px; }
.sheetbar .hd { margin-left: 989px; height: 24px; gap: 6px; }
.hscroll { width: 1085px; height: 37px; margin-left: 26px; border: 1px solid #b5b5b5; background: #dadada; display: flex; }
.hb { width: 37px; background: #fff; display: flex; align-items: center; justify-content: center; border-right: 1px solid #aaa; }
.hb.e { margin-left: auto; }
.ht { width: 924px; background: #fff; border-right: 1px solid #aaa; }

.status { height: 47px; background: #f2f2f2; display: flex; align-items: center; font-size: 27px; }
.ready { margin-left: 10px; line-height: 44px; padding-bottom: 2px; }
.macro { margin-left: 32px; }
.views { display: flex; margin-left: auto; height: 47px; }
.view { width: 67px; display: flex; align-items: center; justify-content: center; }
.view.on { background: #cfcfcf; }
.zoom { margin-left: 10px; }
.pct { margin: 0 15px 2px 22px; width: 72px; font-size: 29px; letter-spacing: -.5px; }
.edge { width: 774px; height: 3px; margin-left: 108px; background: #d8d8d8; }

.logo { position: absolute; left: 2444px; top: 1486px; width: 375px; color: #3598db; }
.brand { display: flex; justify-content: space-between; height: 83px; }
.wm { font: 900 97px/70px "Noto Sans CJK SC", sans-serif; margin-left: -4px; letter-spacing: 1px; width: 200px; }
.dx { width: 171px; background: #3598db; color: #fff; border-radius: 8px 0 14px; font: bold 73px/78px "Noto Sans CJK SC", sans-serif; text-align: center; }
.site { margin-top: 23px; height: 58px; border: 3px solid #3598db; border-radius: 6px; display: flex; justify-content: space-between; }
.site span { font: bold 47px/46px Lato, sans-serif; margin-left: 10px; letter-spacing: .2px; }
.site b { width: 77px; background: #3598db; display: flex; align-items: center; justify-content: center; }

.dialog { position: absolute; left: 1160px; top: 339px; width: 647px; height: 879px; border: 6px solid #fd3846; border-radius: 10px; background: #f0f0f0; box-shadow: 0 8px 26px rgba(0,0,0,.4); color: #1a1a1a; overflow: hidden; }
.dtitle { height: 60px; background: #fff; display: flex; align-items: center; padding: 0 37px 8px 13px; }
.dtitle em { font-style: normal; margin-left: auto; font-size: 29px; color: #333; }
.dtitle svg { margin-left: 87px; }
.dbody { padding: 20px 13px 0; }
.dbody label { display: block; line-height: 34px; }
.dbody u { text-underline-offset: 4px; text-decoration-thickness: 2px; }
.combo { margin-top: 10px; width: 609px; height: 57px; border: 2px solid #b5b5b5; background: #fff; display: flex; justify-content: space-between; align-items: stretch; line-height: 53px; padding-left: 5px; }
.combo b { width: 40px; background: #e5e5e5; border: 2px solid #b0b0b0; margin: -1px; display: flex; align-items: center; justify-content: center; }
.l2 { margin-top: 12px; } .c2 { margin-top: 9px; height: 58px; line-height: 55px; } .l3 { margin-top: 11px; }
.list { margin-top: 9px; width: 609px; height: 222px; border: 2px solid #8f959b; background: #fff; display: flex; justify-content: space-between; padding-top: 1px; }
.items { width: 566px; padding-left: 2px; }
.it { height: 36px; display: flex; align-items: center; line-height: 35px; }
.it i { width: 28px; height: 28px; border: 2px solid #444; background: #fff; margin-right: 2px; }
.it i svg, .opt i svg { width: 100%; height: 100%; }
.it span { padding-left: 5px; flex: 1; }
.sel span { background: #2b86dc; color: #fff; outline: 1px dotted #205f9c; }
.lscroll { width: 38px; background: #f2f2f2; display: flex; flex-direction: column; align-items: center; justify-content: space-between; padding: 15px 0 13px; }
.lscroll div { width: 36px; height: 91px; background: #cdcdcd; margin-top: 45px; }
.opts { margin-top: 39px; display: flex; flex-direction: column; gap: 24px; }
.opt { height: 30px; display: flex; align-items: center; line-height: 32px; }
.opt i { width: 30px; height: 30px; border: 2px solid #444; background: #fff; margin-right: 9px; }
.btns { display: flex; gap: 23.500px; margin-top: 39px; }
.btns div { width: 187px; height: 62px; background: #e2e2e2; border: 2px solid #b5b5b5; text-align: center; line-height: 58px; }
.btns .ok { border: 3px solid #2f7fc4; line-height: 56px; }

.uid { position: absolute; left: 1674px; top: 342px; font: 30px/36px "Liberation Sans", sans-serif; color: rgba(190,190,190,.33); }
.cursor { position: absolute; left: 1245px; top: 857px; }
.play { position: absolute; left: 1380px; top: 840px; }
.mark { position: absolute; left: 2589px; top: 202px; width: 147px; height: 166px; border: 6px solid #fd3846; border-radius: 10px; }
.arrow { position: absolute; left: 1830px; top: 340px; }
```
FILE: sheet.js
```js
const letters = ['', 'A', 'B', 'C', 'D', 'E', 'F', 'G', 'H', 'I', 'J', 'K', 'L'];
const classes = ['slash', '', '', '', '', '', '', 'amt', 'amt'];
const data = [
  ['订购日期', '发票号', '工单号', 'ERPCO号', '所属区域', '产品类别', '数量', '金额', '成本'],
  ['2007/3/21', 'H00012769', 'A12-095', 'C014673-013', '常熟', '宠物用品', '16', '62,548.66', '51,708.03'],
  ['2007/4/28', 'H00012769', 'A12-096', 'C014673-014', '常熟', '宠物用品', '44', '29,465.03', '20,558.50'],
  ['2007/4/28', 'H00012769', 'A12-097', 'C014673-015', '常熟', '宠物用品', '20', '28,907.43', '22,115.23'],
  ['2007/5/31', 'H00012769', 'A12-098', 'C014673-016', '常熟', '宠物用品', '20', '38,421.51', '30,712.18'],
  ['2007/6/13', 'H00012769', 'A12-101', 'C014673-019', '常熟', '宠物用品', '16', '40,762.53', '32,726.66'],
  ['2007/7/16', 'H00012774', 'A11-155', 'C015084-001', '常熟', '宠物用品', '20', '43,105.76', '35,738.66'],
  ['2007/9/14', 'H00012774', 'A11-156', 'C015084-002', '常熟', '宠物用品', '20', '14,238.95', '11,098.92'],
  ['2007/10/19', 'H00012774', 'A12-083', 'C014673-001', '常熟', '宠物用品', '20', '35,182.31', '29,398.00'],
  ['2007/11/20', 'H00012774', 'A12-084', 'C014673-002', '常熟', '宠物用品', '20', '15,096.30', '11,641.51'],
  ['2007/3/23', 'H00012774', 'A12-179', 'C015240-002', '常熟', '宠物用品', '20', '9,842.07', '8,601.75'],
  ['2007/9/24', 'H00012768', 'C12-061', 'C015027-001', '常熟', '服装', '150', '12,373.67', '11,757.98'],
  ['2007/4/28', 'H00012775', 'C12-051', 'C015017-001', '常熟', '宠物用品', '80', '8,943.46', '6,810.46'],
  ['2007/5/31', 'H00012775', 'C12-052', 'C015018-001', '常熟', '宠物用品', '240', '46,040.72', '36,140.10'],
  ['2007/6/13', 'H00012775', 'C12-053', 'C015019-001', '常熟', '宠物用品', '30', '2,325.63', '2,117.62'],
  ['2007/7/16', 'H00012775', 'C12-054', 'C015020-001', '常熟', '宠物用品', '260', '24,070.79', '21,964.92'],
  ['2007/9/14', 'H00012775', 'C12-055', 'C015021-001', '常熟', '宠物用品', '150', '16,824.63', '14,276.14'],
  ['2007/10/19', 'H00012775', 'C12-056', 'C015022-001', '常熟', '宠物用品', '60', '6,894.54', '5,974.57'],
  ['2007/11/20', 'H00012775', 'C12-057', 'C015023-001', '常熟', '宠物用品', '60', '7,415.30', '6,650.99']
];
const notes = { 3: '1、分地区', 5: '2、分地区', 7: '3、将分类' };

document.getElementById('heads').innerHTML = letters
  .map((l, i) => `<div class="${i === 0 ? 'corner' : i < 10 ? 'hs' : ''}">${l}</div>`).join('');

document.getElementById('rows').innerHTML = data.map((cells, r) => {
  const n = r + 1;
  const size = n === 1 ? 'first' : [3, 5, 7].includes(n) ? 'tall' : '';
  const body = cells.map((v, c) => {
    let cls = 'd';
    let html = v;
    if (n === 1) {
      cls += c === 0 ? ' cur' : c === 4 ? ' cut' : ' b';
      html = v.replace('ERPCO', '<span class="sq">ERPCO</span>');
    } else {
      cls += ' ' + classes[c];
      if (c === 1) html = v.replace('H', '<span class="h">H</span>');
      if (c > 6) html = v.replace(/[,.]/g, '<span class="p">$&</span>');
    }
    return `<div class="${cls}"><span>${html}</span></div>`;
  }).join('');
  return `<div class="row ${size}"><div class="num">${n}</div>${body}<div></div><div></div><div class="note">${notes[n] || ''}</div></div>`;
}).join('');
```
